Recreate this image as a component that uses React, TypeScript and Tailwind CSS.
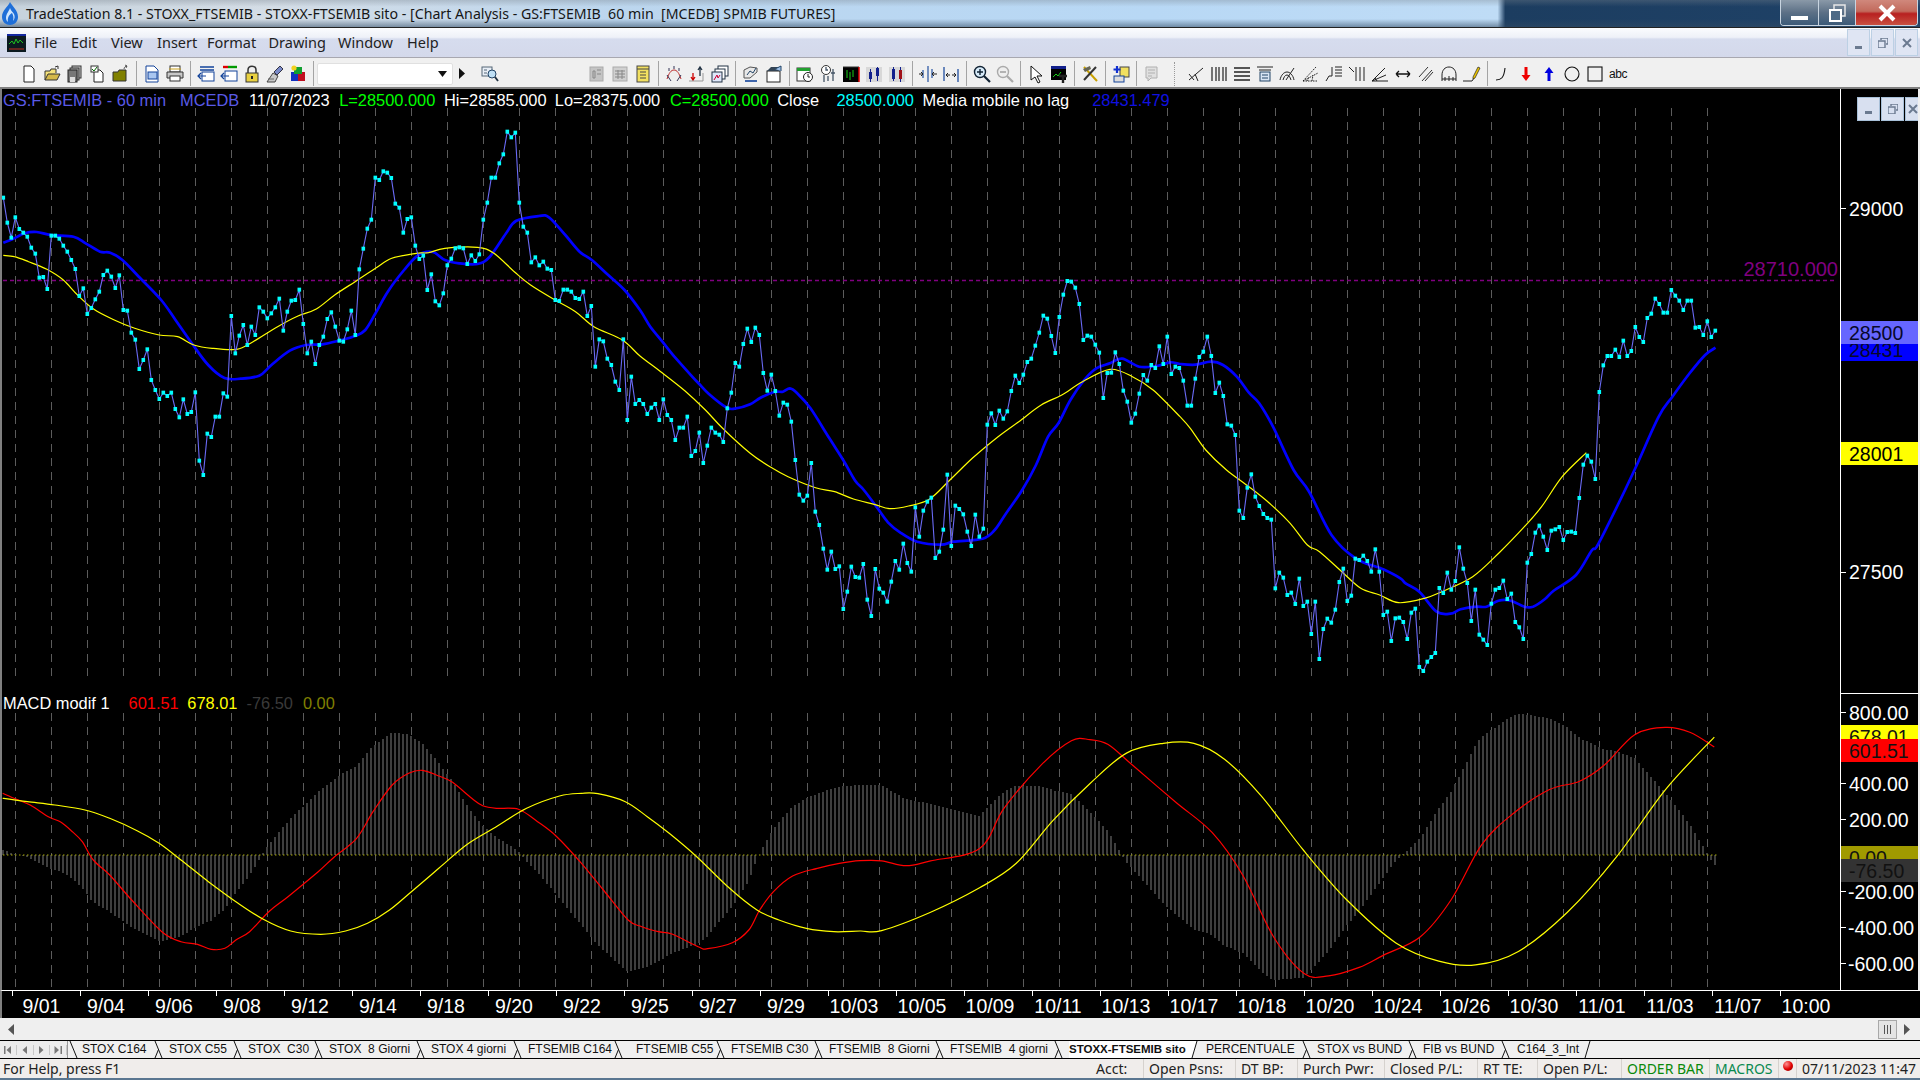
import type { ReactNode } from "react";

const CHART = '"Liberation Sans", Arial, sans-serif';

// price marks, one bar every 4px. y values read in three crops, so three offsets
const crop1 = [293,368,413,352,387,398,410,443,461,533,531,567,407,407,416,437,455,480,507,588,565,642,624,598,575,525,512,530,564,526,630,632,698,719,807,780,748,840,870,897,878,888,878,927,952,898,942,936,877,1082,1125,1001,1011,950,950,880,890,648,760,707,675,735,680,705,622,635,655,640,622,596,692,635,602,600,569,672,760,725,792,735,710,657,637,680,722,725,688,632,705,508,446,386,359,233,240,214,218,234,311,323,398,357,352,437,477,467,570,523,604,616,580,496,476,445,442,445,492,466,483,463,359,308,233,233,190,163,95,112,98,308,380,398,487,472,496,485,506,510,600,603,569,569,575,594,597,575,648,618,800,718,724,776,795,845,870,718,960,830,912,900];
const crop2 = [402,432,413,402,450,388,435,450,510,473,473,440,558,543,488,579,527,473,488,494,516,415,368,279,290,222,176,216,173,195,309,362,314,363,437,398,404,455,570,674,692,677,579,725,765,836,899,845,897,889,1017,965,890,921,923,882,989,1038,897,956,968,995,935,873,899,821,879,905,712,800,722,695,683,864,845,779,614,828,707,717,733,785,828,734,800,776,464,430,465,422,446,424,363,317,339,314,276,266,227,188,137,146,198,249,141,74,33,35,53,102,210,197,200,224,248,384,309,308,247,282,362,395,458,431,371,315,332,285,294,229,282,200,312,290,294];
const crop3 = [302,377,377,296,231,215,170,228,339,308,348,433,437,465,692,714,623,583,650,678,702,714,719,925,878,893,945,938,972,896,978,965,1062,965,1137,1047,1016,1028,989,906,866,963,947,836,840,827,843,875,808,875,1005,995,1083,1015,1013,1026,1077,998,986,1161,1173,1145,1131,1119,924,939,878,929,903,802,866,909,1023,929,1064,1079,1095,971,929,924,902,957,941,1026,1042,1077,848,822,758,737,770,810,752,748,741,780,756,755,759,654,554,527,545,597,336,256,228,228,209,231,182,228,213,141,171,186,114,101,56,72,98,98,30,47,62,90,62,62,143,141,165,124,171,152];

const closes = [
  ...crop1.map((p) => 100 + p / 3),
  ...crop2.map((p) => 270 + p / 3),
  ...crop3.map((p) => 280 + p / 3),
];
const barX = (i: number) => 3.3 + 4 * i;
const pricePoints = closes.map((y, i) => `${barX(i).toFixed(1)},${y.toFixed(1)}`).join(" ");

type Pt = [number, number];
const from8 = (a: Pt[]): Pt[] => a.map(([x, y]) => [x / 2.45, 100 + y / 3]);
const from10 = (a: Pt[]): Pt[] => a.map(([x, y]) => [640 + x / 2.904, 270 + y / 3]);
const from11 = (a: Pt[]): Pt[] => a.map(([x, y]) => [1180 + x / 2.904, 280 + y / 3]);
const from12 = (a: Pt[]): Pt[] => a.map(([x, y]) => [x / 1.823, 700 + y / 3]);
const fromMain = (a: Pt[]): Pt[] => a.map(([x, y]) => [x * 1.2245, y * 1.2245]);

// catmull-rom through the read points so the averages don't look angular
const smooth = (a: Pt[]) => {
  let d = `M${a[0][0].toFixed(1)} ${a[0][1].toFixed(1)}`;
  for (let i = 0; i < a.length - 1; i++) {
    const p0 = a[Math.max(i - 1, 0)];
    const p1 = a[i];
    const p2 = a[i + 1];
    const p3 = a[Math.min(i + 2, a.length - 1)];
    const c1x = p1[0] + (p2[0] - p0[0]) / 6;
    const c1y = p1[1] + (p2[1] - p0[1]) / 6;
    const c2x = p2[0] - (p3[0] - p1[0]) / 6;
    const c2y = p2[1] - (p3[1] - p1[1]) / 6;
    d += `C${c1x.toFixed(1)} ${c1y.toFixed(1)} ${c2x.toFixed(1)} ${c2y.toFixed(1)} ${p2[0].toFixed(1)} ${p2[1].toFixed(1)}`;
  }
  return d;
};

const blueMa = [
  ...from8([[8,428],[30,418],[60,400],[90,396],[125,405],[180,410],[210,430],[245,455],[270,458],[300,480],[340,530],[395,600],[430,660],[470,730],[510,795],[550,834],[590,836],[635,827],[665,795],[710,752],[750,735],[790,733],[830,722],[870,708],[895,690],[920,640],[950,575],[990,510],[1025,465],[1060,456],[1090,480],[1125,490],[1170,492],[1200,470],[1240,400],[1265,362],[1320,348],[1345,352],[1385,405],[1420,455],[1450,480],[1490,525],[1530,570]]),
  ...from10([[0,120],[30,170],[65,215],[100,260],[130,295],[170,340],[200,372],[250,412],[275,416],[320,403],[350,383],[390,366],[415,365],[435,355],[455,368],[495,415],[550,505],[590,570],[625,632],[650,660],[690,715],[720,757],[755,787],[805,815],[875,824],[910,815],[995,806],[1030,780],[1060,735],[1110,660],[1150,585],[1185,500],[1215,460],[1250,390],[1290,330],[1325,295],[1365,280],[1400,266],[1450,290],[1500,288],[1540,277]]),
  ...from11([[0,252],[45,254],[90,245],[125,255],[165,290],[200,338],[230,370],[270,440],[330,570],[375,635],[440,765],[510,835],[590,868],[640,895],[655,910],[695,935],[745,995],[785,1001],[815,988],[860,980],[890,980],[925,962],[960,962],[1000,980],[1025,980],[1060,957],[1085,932],[1150,885],[1195,812],[1210,800],[1250,720],[1320,570],[1390,410],[1430,350],[1480,280],[1525,225],[1555,203]]),
];
const yellowMa = [
  ...from8([[8,466],[35,470],[70,485],[115,508],[155,540],[190,585],[230,628],[280,660],[330,685],[390,705],[435,710],[475,735],[520,745],[580,748],[620,725],[680,680],[730,648],[775,627],[820,585],[870,545],[920,505],[960,475],[1020,460],[1050,458],[1090,445],[1170,442],[1210,460],[1260,515],[1300,555],[1360,600],[1410,635],[1455,680],[1525,720]]),
  ...from10([[0,258],[60,305],[130,362],[190,420],[240,475],[320,550],[380,592],[430,620],[510,653],[565,665],[620,687],[680,703],[725,716],[780,708],[840,688],[900,630],[965,565],[1040,500],[1100,455],[1165,405],[1225,375],[1285,335],[1365,298],[1430,320],[1490,360]]),
  ...from11([[0,410],[30,445],[75,510],[135,570],[200,620],[260,670],[320,730],[370,795],[405,815],[470,875],[525,925],[580,945],[635,968],[710,955],[760,935],[850,890],[930,815],[1000,740],[1050,680],[1110,590],[1180,518]]),
];
const macdLine = [
  ...from12([[5,280],[30,298],[55,315],[90,352],[110,365],[130,392],[150,425],[170,480],[200,525],[240,600],[295,695],[330,725],[360,733],[385,748],[410,745],[430,720],[455,695],[490,635],[525,590],[580,515],[610,470],[650,415],[680,335],[715,255],[745,220],[770,211],[800,228],[825,247],[860,295],[880,317],[905,325],[945,328],[980,365],[1015,410],[1060,490],[1100,570],[1145,660],[1170,680],[1200,695],[1225,702],[1275,742],[1290,746],[1335,728],[1365,690],[1385,630],[1410,575],[1445,528],[1490,505],[1530,490],[1568,482]]),
  ...fromMain([[720,703],[740,707],[760,703],[800,693],[820,660],[850,625],[875,605],[890,604],[905,608],[925,625],[960,655],[990,680],[1015,715],[1040,765],[1065,795],[1085,797],[1110,790],[1130,780],[1160,765],[1185,735],[1210,690],[1235,665],[1265,645],[1290,638],[1310,625],[1335,600],[1360,594],[1380,598],[1400,610]]),
];
const signalLine = [
  ...from12([[5,295],[50,305],[100,315],[155,330],[200,355],[250,392],[290,430],[330,480],[380,545],[430,605],[480,658],[530,693],[585,703],[630,693],[670,670],[710,630],[750,575],[800,505],[850,435],[900,385],[960,325],[1020,288],[1060,280],[1090,281],[1140,305],[1180,350],[1220,400],[1270,470],[1330,565],[1380,630],[1420,660],[1470,685],[1520,695],[1568,693]]),
  ...fromMain([[720,760],[760,745],[800,725],[830,705],[860,670],[890,640],[920,615],[950,607],[975,607],[1000,620],[1030,650],[1065,695],[1100,735],[1140,770],[1175,785],[1205,788],[1240,777],[1280,745],[1320,700],[1360,645],[1400,602]]),
];

const yAt = (line: Pt[], x: number) => {
  if (x <= line[0][0]) return line[0][1];
  for (let i = 1; i < line.length; i++) {
    if (x <= line[i][0]) {
      const [x0, y0] = line[i - 1];
      const [x1, y1] = line[i];
      return y0 + ((y1 - y0) * (x - x0)) / (x1 - x0);
    }
  }
  return line[line.length - 1][1];
};

const gridXs = Array.from({ length: 48 }, (_, n) => 15.5 + 36 * n);
const timeLabels = ["9/01","9/04","9/06","9/08","9/12","9/14","9/18","9/20","9/22","9/25","9/27","9/29","10/03","10/05","10/09","10/11","10/13","10/17","10/18","10/20","10/24","10/26","10/30","11/01","11/03","11/07","10:00"];

const Price = () => (
  <svg className="absolute inset-0" width="1838" height="604" viewBox="2 89 1838 604">
    {gridXs.map((x) => (
      <line key={x} x1={x} x2={x} y1="108" y2="678" stroke="#5c5c5c" strokeDasharray="8 6" />
    ))}
    <line x1="3" x2="1836" y1="280.5" y2="280.5" stroke="#800080" strokeWidth="1.3" strokeDasharray="4 3" />
    <text x="1838" y="276" textAnchor="end" fontSize="20" fill="#800080" fontFamily={CHART}>28710.000</text>
    <path d={smooth(blueMa)} fill="none" stroke="#0000ff" strokeWidth="2.7" />
    <path d={smooth(yellowMa)} fill="none" stroke="#ffff00" strokeWidth="1.2" />
    <polyline points={pricePoints} fill="none" stroke="#6a6af5" strokeWidth="1.1" />
    {closes.map((y, i) => (
      <rect key={i} x={barX(i) - 1.8} y={y - 2} width="3.6" height="4" fill="#00ffff" />
    ))}
  </svg>
);

const Macd = () => (
  <svg className="absolute inset-0" width="1838" height="297" viewBox="2 693 1838 297">
    {gridXs.map((x) => (
      <line key={x} x1={x} x2={x} y1="713" y2="987" stroke="#5c5c5c" strokeDasharray="8 6" />
    ))}
    {closes.map((_, i) => {
      const x = Math.round(barX(i));
      const d = yAt(macdLine, barX(i)) - yAt(signalLine, barX(i));
      return <line key={i} x1={x} x2={x} y1="855" y2={855 + d} stroke="#3e3e3e" strokeWidth="2" shapeRendering="crispEdges" />;
    })}
    <line x1="3" x2="1717" y1="855" y2="855" stroke="#a8a800" strokeWidth="1.2" strokeDasharray="1.5 2.5" />
    <path d={smooth(macdLine)} fill="none" stroke="#ff0000" strokeWidth="1.2" />
    <path d={smooth(signalLine)} fill="none" stroke="#ffff00" strokeWidth="1.2" />
  </svg>
);

// toolbar cell, drawn in a 20 box
const I = ({ children }: { children: ReactNode }) => (
  <div className="w-[23px] shrink-0 flex items-center justify-center">
    <svg width="20" height="20" viewBox="0 0 20 20" fill="none">{children}</svg>
  </div>
);
const Sep = () => (
  <div className="w-[8px] shrink-0 flex items-center justify-center">
    <div className="w-px h-[25px] bg-[#a4a4a4]" />
  </div>
);

const LineIcons = () => (
  <>
    <I><path d="M3 16 17 4M9 10l3 7M3 10l5 6" stroke="#222" strokeWidth="1" /></I>
    <I><path d="M3 3v14M7 3v14M10 3v14M14 3v14M17 3v14" stroke="#222" strokeWidth="1.2" /></I>
    <I><path d="M2 4h16M2 8h16M2 12h16M2 16h16" stroke="#222" strokeWidth="1.4" /></I>
    <I><path d="M2 3h16M4 6h12" stroke="#222" /><rect x="5" y="8" width="10" height="9" fill="#d8e4f4" stroke="#246" /><path d="M7 11h6M7 14h6" stroke="#246" /></I>
    <I><path d="M2 16c1-5 4-8 7-8s6 3 7 8M5 16c1-3 2-5 4-5s3 2 4 5M8 16l8-12" stroke="#222" /></I>
    <I><path d="M2 17h15M2 17 15 3M2 17l15-8M6 17l2-4M11 17l1-6" stroke="#222" strokeDasharray="1.5 1" /></I>
    <I><path d="M2 17l3-5h3V3M11 3h7M11 6h7M11 9h7M11 12h7" stroke="#222" /></I>
    <I><path d="M2 3l5 5M9 3v14M13 3v14M17 3v14" stroke="#222" /></I>
    <I><path d="M2 17h16M2 17 15 4M2 17l14-6M5 14l2 3" stroke="#222" /></I>
    <I><path d="M3 10h14M3 10l3-3M3 10l3 3M17 10l-3-3M17 10l-3 3" stroke="#111" strokeWidth="1.3" /></I>
    <I><path d="M3 13 12 3M6 17 16 6M9 17l8-9" stroke="#333" /></I>
    <I><path d="M3 17v-6c0-5 3-8 7-8s7 3 7 8v6M6 17v-4M10 17v-5M14 17v-4M3 15h14" stroke="#222" /></I>
    <I><path d="M1 17h9l2-3" stroke="#222" /><path d="m11 13 5-10 2 1-5 10-2 1z" fill="#f0c800" stroke="#222" strokeWidth=".7" /></I>
  </>
);

const Toolbar = () => (
  <div className="h-[31px] shrink-0 flex items-center pl-[17px] bg-[#f0f0f0] border-b-2 border-[#808080] pt-[2px]">
    <I><path d="M5 2h7l3 3v13H5z" fill="#fff" stroke="#222" /></I>
    <I><path d="M3 16V7h5l1-2h5v4" fill="#f5e27a" stroke="#333" /><path d="M3 16l3-6h12l-3 6z" fill="#d4b84a" stroke="#333" /><path d="M13 3l3-1v3" stroke="#333" /></I>
    <I><rect x="7" y="2" width="9" height="12" fill="#ccc" stroke="#333" /><rect x="5" y="4" width="9" height="12" fill="#aaa" stroke="#333" /><rect x="3" y="6" width="9" height="12" fill="#777" stroke="#222" /><rect x="5" y="13" width="5" height="5" fill="#ddd" /></I>
    <I><path d="M6 6h6l3 3v9H6z" fill="#fff" stroke="#222" /><rect x="3" y="2" width="7" height="6" fill="#fff" stroke="#333" /><path d="M4 5l2 2 3-4" stroke="#060" /></I>
    <I><path d="M2 17V8h5l1-2h7v11z" fill="#808000" stroke="#333" /><path d="M13 5c0-2 2-3 3-3m0 0-2-1m2 1-1 2" stroke="#333" strokeWidth=".8" /></I>
    <Sep />
    <I><path d="M4 2h8l4 4v12H4z" fill="#fff" stroke="#12439a" /><rect x="6" y="8" width="9" height="7" fill="#a9c6f0" stroke="#12439a" /></I>
    <I><rect x="5" y="2" width="10" height="6" fill="#fff" stroke="#333" /><path d="M2 8h16v6H2z" fill="#c8c8c8" stroke="#333" /><rect x="5" y="12" width="10" height="5" fill="#fff" stroke="#333" /><path d="M4 5h12" stroke="#c8a020" /></I>
    <Sep />
    <I><path d="M4 3h14M4 6h14" stroke="#12439a" strokeWidth="1.6" /><rect x="6" y="8" width="12" height="9" fill="#fff" stroke="#12439a" /><path d="M10 12H2m3-3-3 3 3 3" stroke="#12439a" strokeWidth="1.2" /></I>
    <I><path d="M4 3h5" stroke="#d00" strokeWidth="2.4" /><path d="M9 3h9" stroke="#090" strokeWidth="2.4" /><rect x="6" y="7" width="12" height="10" fill="#fff" stroke="#12439a" /><path d="M10 12H2m3-3-3 3 3 3" stroke="#12439a" strokeWidth="1.2" /></I>
    <I><rect x="4" y="9" width="12" height="9" fill="#e8d040" stroke="#333" /><path d="M6 9V6c0-5 8-5 8 0v3" stroke="#333" strokeWidth="1.5" /><rect x="9" y="12" width="2" height="3" fill="#222" /></I>
    <I><path d="M2 18 8 9l5 3-3 6z" fill="#c8c8c8" stroke="#444" /><path d="m9 8 6-6 3 3-6 6z" fill="#7a8ac8" stroke="#334" /><path d="M3 15h6" stroke="#666" /></I>
    <I><rect x="3" y="8" width="7" height="9" fill="#1230c0" /><rect x="10" y="8" width="7" height="9" fill="#c01020" /><rect x="6" y="3" width="8" height="7" fill="#10a030" /><circle cx="6" cy="4" r="2.6" fill="#f0d020" /></I>
    <Sep />
    <div className="w-[136px] h-[22px] shrink-0 bg-white border border-[#e0e0e0] rounded-[2px] flex items-center justify-end pr-[5px]">
      <svg width="9" height="6" viewBox="0 0 9 6"><path d="M0 0h9L4.5 6z" fill="#111" /></svg>
    </div>
    <div className="w-[18px] shrink-0 flex justify-center">
      <svg width="6" height="11" viewBox="0 0 6 11"><path d="M0 0l6 5.5L0 11z" fill="#111" /></svg>
    </div>
    <div className="ml-[7.5px]">
      <I><rect x="2" y="3" width="10" height="9" fill="#e8eef6" stroke="#567" /><path d="M4 6h3M4 9h3" stroke="#567" /><circle cx="12" cy="10" r="4" fill="#bfe0f6" stroke="#246" /><path d="m15 13 3 4" stroke="#234" strokeWidth="1.8" /></I>
    </div>
    <div className="w-[84px] shrink-0" />
    <I><rect x="3" y="3" width="13" height="14" fill="#c4c4c4" stroke="#aaa" /><path d="M10 6h4M10 10h4M6 7h2v7H6z" stroke="#888" /></I>
    <I><rect x="3" y="3" width="14" height="14" fill="#d0d0d0" stroke="#aaa" /><path d="M5 7h10M5 10h10M5 13h10M8 6v9M12 6v9" stroke="#888" /></I>
    <I><rect x="4" y="2" width="12" height="16" fill="#f2e060" stroke="#444" /><path d="M4 5h12M7 8h6M7 11h6M7 14h6" stroke="#444" /></I>
    <Sep />
    <I><path d="M3 15c2-6 4-9 7-9s5 3 7 9" stroke="#bb3030" fill="#eee" /><path d="M3 11l4 6M17 11l-4 6M5 4v3M10 2v3M15 4v3" stroke="#335" /></I>
    <I><path d="M6 9v8M4 13l2 3 2-3" stroke="#c00" strokeWidth="1.3" /><path d="M13 4v8M11 6l2-3 2 3" stroke="#234" strokeWidth="1.3" /><path d="M2 17h14V9" stroke="#999" /></I>
    <I><rect x="8" y="2" width="10" height="10" fill="#fff" stroke="#234" /><rect x="5" y="5" width="10" height="10" fill="#fff" stroke="#234" /><rect x="2" y="8" width="10" height="10" fill="#dfe8fa" stroke="#234" /><path d="M4 16l3-5 1 3 2-3" stroke="#c03" /></I>
    <Sep />
    <I><path d="M3 14V6l6-3 7 1v4l-7 6z" fill="#e8e8e8" stroke="#555" /><path d="M6 11l3-4 3 2 3-5" stroke="#246" /><path d="M4 17h12" stroke="#12439a" strokeWidth="1.6" /></I>
    <I><rect x="3" y="7" width="13" height="11" fill="#fff" stroke="#222" /><path d="M3 7l4-4h10l-1 4z" fill="#345" /><path d="M11 5l6-3v5" fill="#9cc0ea" stroke="#246" /></I>
    <Sep />
    <I><rect x="2" y="4" width="13" height="13" fill="#fff" stroke="#333" /><path d="M2 4h13v3H2z" fill="#22a030" /><circle cx="13" cy="13" r="4.5" fill="#fff" stroke="#222" /><path d="M13 10v3h2" stroke="#222" /></I>
    <I><circle cx="8" cy="6" r="4.5" fill="#fff" stroke="#333" /><path d="M8 3v3h2M6 11v7M10 12v5M15 5v12M13 9h4" stroke="#456" strokeWidth="1.3" /></I>
    <I><rect x="2" y="3" width="16" height="15" fill="#000" /><path d="M6 6v8M9 8v8M12 6v7" stroke="#17d117" /><path d="M2 3h16" stroke="#333" /><path d="M18 3v15" stroke="#d00" strokeWidth="1.5" /></I>
    <I><path d="M2 3h16v15H2z" fill="#d8d8d8" /><rect x="5" y="8" width="3" height="7" fill="#12208c" /><path d="M6.500 5v13M13.500 3v14" stroke="#12208c" /><rect x="12" y="4" width="3" height="8" fill="#12208c" /></I>
    <I><path d="M2 3h16v15H2z" fill="#d8d8d8" /><rect x="5" y="5" width="3" height="10" fill="#12208c" /><path d="M6.500 3v14M13.500 3v15" stroke="#12208c" /><rect x="12" y="6" width="3" height="9" fill="#a01018" /></I>
    <Sep />
    <I><path d="M10 2v16M5 6v8M14 5v9" stroke="#12439a" strokeWidth="1.1" /><path d="M1 10h4M5 10 3 8M5 10l-2 2M19 10h-5M14 10l2-2M14 10l2 2" stroke="#222" /></I>
    <I><path d="M3 3v14M17 5v13" stroke="#12439a" strokeWidth="1.2" /><path d="M5 11h4M5 11l2-2M5 11l2 2M15 11h-4M15 11l-2-2M15 11l-2 2" stroke="#222" /></I>
    <Sep />
    <I><circle cx="8" cy="8" r="5.5" fill="#d8ecfa" stroke="#123" strokeWidth="1.4" /><path d="M5 8h6M8 5v6" stroke="#123" strokeWidth="1.4" /><path d="m12 12 6 6" stroke="#123" strokeWidth="2.2" /></I>
    <I><circle cx="8" cy="8" r="5.5" fill="#eee" stroke="#aaa" strokeWidth="1.4" /><path d="M5 8h6" stroke="#999" strokeWidth="1.4" /><path d="m12 12 6 6" stroke="#aaa" strokeWidth="2.2" /></I>
    <Sep />
    <I><path d="M5 2v14l4-3 3 6 2-1-3-6h5z" fill="#fff" stroke="#111" /></I>
    <I><path d="M2 2h15v3H2z" fill="#12208c" /><rect x="2" y="5" width="15" height="11" fill="#000" /><path d="M4 13l3-3 2 2 3-4" stroke="#17d117" /><path d="M10 12h8M14 12v7" stroke="#222" strokeWidth="2.4" /></I>
    <Sep />
    <I><path d="m4 3 13 14" stroke="#c8a000" strokeWidth="2" /><path d="M16 3 4 16" stroke="#333" strokeWidth="2" /><path d="M10 2 3 5l2 3 6-3z" fill="#665" /></I>
    <Sep />
    <I><rect x="9" y="3" width="9" height="10" fill="#f2e060" stroke="#444" /><path d="M6 2v7M2.500 5.500h7" stroke="#1030d0" strokeWidth="2.2" /><rect x="3" y="12" width="10" height="6" fill="#ddd" stroke="#12439a" /></I>
    <Sep />
    <I><path d="M4 3h11v11h-6l-3 3v-3H4z" fill="#e0e0e0" stroke="#b0b0b0" /><path d="M6 6h7M6 9h7M6 12h4" stroke="#b0b0b0" /></I>
    <div className="w-[21px] shrink-0 flex justify-center">
      <div className="w-px h-[24px] border-l border-dotted border-[#999]" />
    </div>
    <LineIcons />
    <Sep />
    <I><path d="M3 16c5 0 8-2 9-12" stroke="#111" strokeWidth="1.1" /></I>
    <I><path d="M8.500 3h3v8h3l-4.500 6-4.500-6h3z" fill="#ee0000" /></I>
    <I><path d="M8.500 17h3V9h3L10 3 5.500 9h3z" fill="#0000e0" /></I>
    <I><circle cx="10" cy="10" r="7" stroke="#111" strokeWidth="1.1" /></I>
    <I><rect x="3" y="3" width="14" height="14" stroke="#111" strokeWidth="1.1" /></I>
    <div className="w-[23px] shrink-0 text-center text-[12px] text-[#111] leading-none tracking-[-0.5px] font-['Liberation_Sans']">abc</div>
  </div>
);

const tabs = [
  { label: "STOX C164", w: "w-[64px]" },
  { label: "STOX C55", w: "w-[56px]" },
  { label: "STOX  C30", w: "w-[58px]" },
  { label: "STOX  8 Giorni", w: "w-[79px]" },
  { label: "STOX 4 giorni", w: "w-[74px]" },
  { label: "FTSEMIB C164", w: "w-[78px]" },
  { label: "FTSEMIB C55", w: "w-[79px] pl-[7px]" },
  { label: "FTSEMIB C30", w: "w-[75px]" },
  { label: "FTSEMIB  8 Giorni", w: "w-[98px]" },
  { label: "FTSEMIB  4 giorni", w: "w-[96px]" },
];
const tabsAfter = [
  { label: "PERCENTUALE", w: "w-[88px]" },
  { label: "STOX vs BUND", w: "w-[83px]" },
  { label: "FIB vs BUND", w: "w-[70px]" },
];

const Slant = () => (
  <svg className="shrink-0" width="23" height="17" viewBox="0 0 23 17">
    <path d="M9 0l7 17M9 17l3.500-8.500" stroke="#111" fill="none" />
  </svg>
);

const TabBar = () => (
  <div className="h-[19px] shrink-0 flex items-stretch bg-[#f0f0f0] border-y border-black font-['Liberation_Sans'] text-[12px] text-[#111] whitespace-pre">
    <div className="w-[68px] shrink-0 flex items-center border-r border-[#999] bg-[#ececec]">
      {["M1 1h1.500v8H1zM8 1v8L3.500 5z", "M7 1v8L2.500 5z", "M3 1v8l4.500-4z", "M1.500 1v8L6 5zM7.500 1H9v8H7.500z"].map((d) => (
        <div key={d} className="w-[17px] flex justify-center border-r border-[#c8c8c8]">
          <svg width="10" height="10" viewBox="0 0 10 10"><path d={d} fill="#777" /></svg>
        </div>
      ))}
    </div>
    <svg className="shrink-0" width="14" height="17" viewBox="0 0 14 17"><path d="M2 0l7 17" stroke="#111" fill="none" /></svg>
    {tabs.map((t) => (
      <div key={t.label} className="contents">
        <div className={`${t.w} shrink-0 text-center leading-[17px]`}>{t.label}</div>
        <Slant />
      </div>
    ))}
    <div className="w-[120px] shrink-0 bg-white leading-[17px] font-bold text-[11.5px]">STOXX-FTSEMIB sito</div>
    <svg className="shrink-0" width="17" height="17" viewBox="0 0 17 17">
      <path d="M0 0h8L3 17H0z" fill="#fff" />
      <path d="M8 0 3 17" stroke="#111" fill="none" />
    </svg>
    {tabsAfter.map((t) => (
      <div key={t.label} className="contents">
        <div className={`${t.w} shrink-0 text-center leading-[17px]`}>{t.label}</div>
        <Slant />
      </div>
    ))}
    <div className="w-[64px] shrink-0 text-center leading-[17px]">C164_3_Int</div>
    <svg className="shrink-0" width="14" height="17" viewBox="0 0 14 17"><path d="M10 0 5 17" stroke="#111" fill="none" /></svg>
  </div>
);

const statusCells = [
  { text: "Acct:", cls: "w-[52px] text-[#222]" },
  { text: "Open Psns:", cls: "w-[92px] text-[#222] border-l border-[#d6d2ce]" },
  { text: "DT BP:", cls: "w-[62px] text-[#222] border-l border-[#d6d2ce]" },
  { text: "Purch Pwr:", cls: "w-[87px] text-[#222] border-l border-[#d6d2ce]" },
  { text: "Closed P/L:", cls: "w-[93px] text-[#222] border-l border-[#d6d2ce]" },
  { text: "RT TE:", cls: "w-[60px] text-[#222] border-l border-[#d6d2ce]" },
  { text: "Open P/L:", cls: "w-[84px] text-[#222] border-l border-[#d6d2ce]" },
  { text: "ORDER BAR", cls: "w-[88px] text-[#0a8a0a] border-l border-[#d6d2ce]" },
  { text: "MACROS", cls: "w-[69px] text-[#0a8a50] border-l border-[#d6d2ce]" },
];

export default function App() {
  return (
    <div className="w-[1920px] h-[1080px] flex flex-col overflow-hidden bg-[#f0f0f0] font-['Noto_Sans',sans-serif]">
      {/* title bar */}
      <div className="h-[28px] shrink-0 flex items-start border-b border-[#222] bg-[linear-gradient(180deg,rgba(120,130,140,0.35)_0%,rgba(120,130,140,0)_25%,rgba(120,130,140,0)_70%,rgba(50,75,100,0.55)_100%),linear-gradient(90deg,#c6d2dc_0%,#d4dde6_14%,#bcd6ee_32%,#b8d8f5_60%,#bfdcf6_78%,#1c3d60_78.4%,#1f4268_100%)]">
        <svg className="ml-[1px] mt-[2px] shrink-0" width="18" height="23" viewBox="0 0 18 23">
          <path d="M9 0c2 4 8 8 8 15 0 5-4 8-8 8s-8-3-8-8C1 8 7 5 9 0z" fill="#1f6fd8" />
          <path d="M9 6c-1 3-4 6-4 10 0 2 1 3 2 4-1-5 2-8 4-9 1 2 2 4 1 8 2-2 2-5 1-7-1-2-3-3-4-6z" fill="#cfe6ff" />
        </svg>
        <div className="ml-[7px] mt-[3px] text-[14.2px] leading-[22px] text-[#161616] whitespace-pre">
          TradeStation 8.1 - STOXX_FTSEMIB - STOXX-FTSEMIB sito - [Chart Analysis - GS:FTSEMIB  60 min  [MCEDB] SPMIB FUTURES]
        </div>
        <div className="ml-auto mr-[2px] h-[26px] w-[138px] flex rounded-b-[4px] border border-t-0 border-[#c8d4e0] overflow-hidden">
          <div className="w-[38px] flex items-end justify-center pb-[5px] border-r border-[#c8d4e0] bg-[linear-gradient(180deg,#8a99a8_0%,#5c7086_50%,#3c5a78_100%)]">
            <div className="w-[17px] h-[4px] bg-white" />
          </div>
          <div className="w-[37px] flex items-center justify-center border-r border-[#c8d4e0] bg-[linear-gradient(180deg,#8a99a8_0%,#5c7086_50%,#3c5a78_100%)]">
            <svg width="20" height="20" viewBox="0 0 20 20"><rect x="7" y="2" width="11" height="11" fill="none" stroke="#e8e8e8" strokeWidth="1.5" /><rect x="3" y="7" width="11" height="11" fill="#4e6a86" stroke="#fff" strokeWidth="2" /></svg>
          </div>
          <div className="flex-1 flex items-center justify-center bg-[linear-gradient(180deg,#d0887c_0%,#c26a5c_45%,#b82020_55%,#c85040_100%)]">
            <svg width="20" height="18" viewBox="0 0 20 18"><path d="M3 2l14 14M17 2 3 16" stroke="#fff" strokeWidth="4" /></svg>
          </div>
        </div>
      </div>

      {/* menu */}
      <div className="h-[30px] shrink-0 flex items-center border-b border-[#a8a8b0] bg-[linear-gradient(180deg,#fbfcfe_0%,#eef1f8_32%,#d6dcee_38%,#d4d9eb_100%)] text-[14.5px] text-[#222]">
        <svg className="ml-[7px] shrink-0" width="19" height="18" viewBox="0 0 19 18">
          <rect width="19" height="18" fill="#0c1a20" />
          <path d="M0 0h19v2H0z" fill="#1428a0" />
          <path d="M2 10l3-3 2 3 2-5 2 4 2-3 3 3" stroke="#20c020" fill="none" />
          <path d="M2 15h15" stroke="#c03020" />
        </svg>
        <div className="ml-[8px] flex whitespace-pre">
          <div className="w-[37px]">File</div>
          <div className="w-[40px]">Edit</div>
          <div className="w-[46px]">View</div>
          <div className="w-[50px]">Insert</div>
          <div className="w-[61.5px]">Format</div>
          <div className="w-[69.5px]">Drawing</div>
          <div className="w-[69px]">Window</div>
          <div>Help</div>
        </div>
        <div className="ml-auto mr-[2px] flex gap-px h-full pt-px">
          <div className="w-[23px] h-[27px] flex items-end justify-center pb-[6px] border border-[#bcd0e4] bg-[#dfe5f3]"><div className="w-[7px] h-[3px] bg-[#6b7a90]" /></div>
          <div className="w-[23px] h-[27px] flex items-center justify-center border border-[#bcd0e4] bg-[#dfe5f3]">
            <svg width="10" height="10" viewBox="0 0 10 10"><path d="M3 2V0h7v6H8M0 3h7v7H0z" fill="none" stroke="#6b7a90" strokeWidth="1.4" /></svg>
          </div>
          <div className="w-[23px] h-[27px] flex items-center justify-center border border-[#bcd0e4] bg-[#dfe5f3]">
            <svg width="10" height="10" viewBox="0 0 10 10"><path d="M1 1l8 8M9 1 1 9" stroke="#6b7a90" strokeWidth="2" /></svg>
          </div>
        </div>
      </div>

      <Toolbar />

      {/* chart */}
      <div className="h-[901px] shrink-0 grid grid-cols-[1838px_80px] grid-rows-[604px_297px] bg-black border-l-2 border-[#808080]" style={{ fontFamily: CHART }}>
        <div className="relative">
          <Price />
          <div className="relative flex items-center h-[22px] pl-px text-[16.4px] text-white whitespace-pre">
            <span className="text-[#5a5ae6]">GS:FTSEMIB - 60 min</span>
            <span className="ml-[14px] text-[#5a5ae6]">MCEDB</span>
            <span className="ml-[9.7px]">11/07/2023</span>
            <span className="ml-[9.4px] text-[#00ff00]">L=28500.000</span>
            <span className="ml-[8.7px]">Hi=28585.000</span>
            <span className="ml-[8.3px]">Lo=28375.000</span>
            <span className="ml-[9.8px] text-[#00ff00]">C=28500.000</span>
            <span className="ml-[8.4px]">Close</span>
            <span className="ml-[17.3px] text-[#00ffff]">28500.000</span>
            <span className="ml-[8.6px]">Media mobile no lag</span>
            <span className="ml-[23px] text-[#1010e0]">28431.479</span>
          </div>
        </div>

        <div className="relative border-l border-white border-r-2 border-r-[#f0f0f0] text-[19.5px] leading-[24px]">
          <div className="absolute top-[8px] left-[16px] flex gap-px">
            <div className="w-[23px] h-[24px] flex items-end justify-center pb-[6px] border border-[#a8c0d8] bg-[#d8e0f0]"><div className="w-[7px] h-[3px] bg-[#6b7a90]" /></div>
            <div className="w-[23px] h-[24px] flex items-center justify-center border border-[#a8c0d8] bg-[#d8e0f0]">
              <svg width="10" height="10" viewBox="0 0 10 10"><path d="M3 2V0h7v6H8M0 3h7v7H0z" fill="none" stroke="#6b7a90" strokeWidth="1.4" /></svg>
            </div>
            <div className="w-[13px] h-[24px] overflow-hidden flex items-center justify-end border-l border-y border-[#a8c0d8] bg-[#d8e0f0]">
              <svg className="shrink-0" width="10" height="10" viewBox="0 0 10 10"><path d="M1 1l8 8M9 1 1 9" stroke="#6b7a90" strokeWidth="2" /></svg>
            </div>
          </div>
          <div className="absolute left-0 top-[119px] w-[5px] h-px bg-white" />
          <div className="absolute left-[8px] top-[108px] text-white">29000</div>
          <div className="absolute inset-x-0 top-[249px] h-[23px] pl-[8px] bg-[#0000ff] text-[#08082a]">28431</div>
          <div className="absolute inset-x-0 top-[232px] h-[23px] pl-[8px] bg-[#6666ff] text-[#08082a]">28500</div>
          <div className="absolute inset-x-0 top-[353px] h-[23px] pl-[8px] bg-[#ffff00] text-black">28001</div>
          <div className="absolute left-0 top-[483px] w-[5px] h-px bg-white" />
          <div className="absolute left-[8px] top-[471px] text-white">27500</div>
        </div>

        <div className="relative">
          <Macd />
          <div className="relative flex items-center h-[20px] pl-px text-[16.4px] whitespace-pre">
            <span className="text-white">MACD modif 1</span>
            <span className="ml-[19px] text-[#ff0000]">601.51</span>
            <span className="ml-[8.6px] text-[#ffff00]">678.01</span>
            <span className="ml-[9px] text-[#3a3a3a]">-76.50</span>
            <span className="ml-[10px] text-[#808000]">0.00</span>
          </div>
        </div>

        <div className="relative border-l border-t border-white border-r-2 border-r-[#f0f0f0] text-[19.5px] leading-[24px] text-white">
          <div className="absolute left-[8px] top-[7px]">800.00</div>
          <div className="absolute inset-x-0 top-[31px] h-[23px] pl-[8px] bg-[#ffff00] text-[#111]">678.01</div>
          <div className="absolute inset-x-0 top-[45px] h-[23px] pl-[8px] bg-[#ff0000] text-[#111]">601.51</div>
          <div className="absolute left-[8px] top-[78px]">400.00</div>
          <div className="absolute left-[8px] top-[114px]">200.00</div>
          <div className="absolute inset-x-0 top-[152px] h-[23px] pl-[8px] bg-[#a09a00] text-[#111]">0.00</div>
          <div className="absolute inset-x-0 top-[165px] h-[23px] pl-[8px] bg-[#333333] text-[#111]">-76.50</div>
          <div className="absolute left-[7px] top-[186px]">-200.00</div>
          <div className="absolute left-[7px] top-[222px]">-400.00</div>
          <div className="absolute left-[7px] top-[258px]">-600.00</div>
          <div className="absolute left-0 top-[18px] w-[5px] h-px bg-white" />
          <div className="absolute left-0 top-[89px] w-[5px] h-px bg-white" />
          <div className="absolute left-0 top-[125px] w-[5px] h-px bg-white" />
          <div className="absolute left-0 top-[197px] w-[5px] h-px bg-white" />
          <div className="absolute left-0 top-[233px] w-[5px] h-px bg-white" />
          <div className="absolute left-0 top-[269px] w-[5px] h-px bg-white" />
        </div>
      </div>

      {/* time axis */}
      <div className="h-[28px] shrink-0 flex pl-[2px] bg-black border-t border-white border-l-2 border-l-[#808080] text-[19.5px] leading-[26px] text-white" style={{ fontFamily: CHART }}>
        {timeLabels.map((t) => (
          <div key={t} className="relative w-[68px] shrink-0 text-center whitespace-nowrap">
            <div className="absolute left-[7.500px] top-0 w-px h-[5px] bg-white" />
            <span className={t === "9/01" ? "inline-block mt-[2px] ml-[7px]" : "inline-block mt-[2px]"}>{t}</span>
          </div>
        ))}
      </div>

      {/* scrollbar */}
      <div className="h-[22px] shrink-0 flex items-center justify-between bg-[#efefef] pl-[8px] pr-[10px]">
        <svg width="6" height="11" viewBox="0 0 6 11"><path d="M6 0 0 5.500 6 11z" fill="#555" /></svg>
        <div className="flex items-center gap-[7px]">
          <div className="w-[19px] h-[19px] flex items-center justify-center gap-[2px] border border-[#a8a8a8] bg-[#e4e4e4]">
            <div className="w-px h-[9px] bg-[#555]" />
            <div className="w-px h-[9px] bg-[#555]" />
            <div className="w-px h-[9px] bg-[#555]" />
          </div>
          <svg width="6" height="11" viewBox="0 0 6 11"><path d="M0 0l6 5.500L0 11z" fill="#555" /></svg>
        </div>
      </div>

      <TabBar />

      {/* status bar */}
      <div className="h-[19px] shrink-0 flex items-center bg-[#f0edeb] text-[14px] leading-[20px] whitespace-pre">
        <div className="w-[1091px] pl-[3px] text-[#222]">For Help, press F1</div>
        {statusCells.map((c) => (
          <div key={c.text} className={`${c.cls} h-full pl-[5px] shrink-0`}>{c.text}</div>
        ))}
        <div className="w-[18px] h-full shrink-0 flex justify-center pt-[2px] border-l border-[#d6d2ce]">
          <div className="w-[10px] h-[10px] rounded-full bg-[radial-gradient(circle_at_35%_30%,#ff9090,#e00000_55%,#800000)]" />
        </div>
        <div className="flex-1 h-full pl-[5px] text-[#222] border-l border-[#d6d2ce]">07/11/2023 11:47</div>
      </div>
      <div className="h-[2px] shrink-0 bg-[#5a7690]" />
    </div>
  );
}
